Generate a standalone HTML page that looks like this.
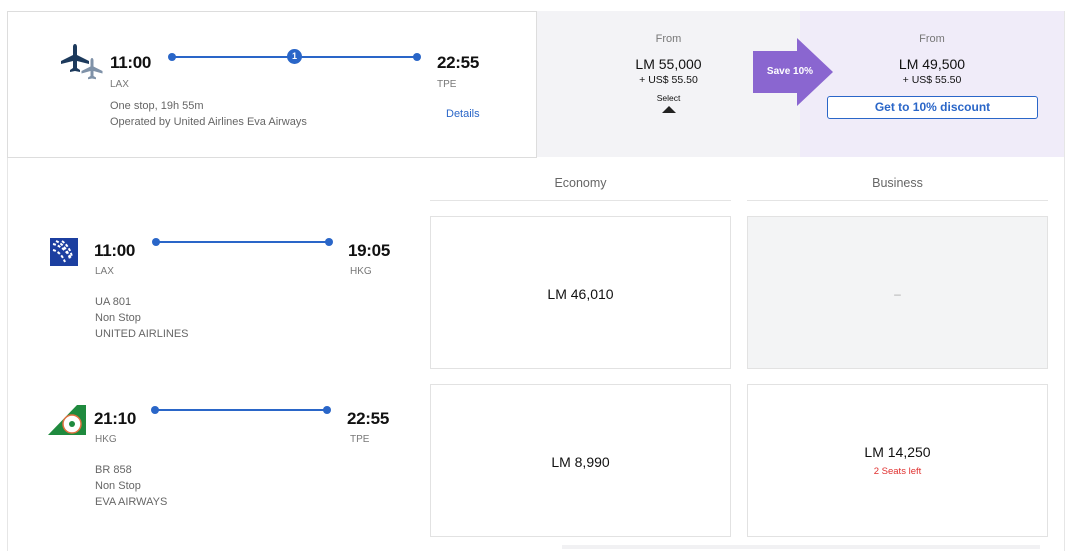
<!DOCTYPE html>
<html><head><meta charset="utf-8"><style>
*{margin:0;padding:0;box-sizing:border-box}
body{width:1080px;height:548px;background:#fff;font-family:"Liberation Sans",sans-serif;position:relative;overflow:hidden;color:#111}
.a{position:absolute}
.t{font-size:17px;font-weight:bold;color:#111;letter-spacing:-0.3px}
.s{font-size:10px;color:#777}
.g{font-size:11px;color:#666;line-height:16px}
.dot{width:8px;height:8px;border-radius:50%;background:#2a66c8}
.ln{height:2px;background:#2a66c8}
.box{border:1px solid #e2e2e2;background:#fff}
.c{text-align:center}
</style></head><body>
<div class="a" style="left:7px;top:11px;width:1058px;height:540px;border-right:1px solid #e6e6e6;border-left:1px solid #e6e6e6"></div>
<div class="a" style="left:7px;top:11px;width:530px;height:147px;border:1px solid #ddd"></div>
<div class="a" style="left:537px;top:11px;width:263px;height:146px;background:#f3f3f6"></div>
<div class="a" style="left:800px;top:11px;width:264px;height:146px;background:#f0ecf9"></div>

<svg class="a" style="left:60px;top:43px" width="46" height="42" viewBox="0 0 46 42">
<path fill="#1d3a5c" d="M15 1c1 0 2 1 2 3v8l12 6v3l-12-3v7l3 2v2l-5-1-5 1v-2l3-2v-7L1 21v-3l12-6V4c0-2 1-3 2-3z"/>
<path fill="#7f92a8" d="M32 15c.8 0 1.5 1 1.5 2.5v6l9 4.5v2.5l-9-2.5v5l2.5 1.5v1.8l-4-.8-4 .8v-1.8l2.5-1.5v-5l-9 2.5V28l9-4.5v-6c0-1.5.7-2.5 1.5-2.5z"/>
</svg>
<div class="a t" style="left:110px;top:53px">11:00</div>
<div class="a s" style="left:110px;top:79px">LAX</div>
<div class="a dot" style="left:168px;top:53px"></div>
<div class="a ln" style="left:172px;top:56px;width:245px"></div>
<div class="a dot" style="left:413px;top:53px"></div>
<div class="a" style="left:287px;top:49px;width:15px;height:15px;border-radius:50%;background:#2a66c8;color:#fff;font-size:9px;font-weight:bold;text-align:center;line-height:15px">1</div>
<div class="a t" style="left:437px;top:53px">22:55</div>
<div class="a s" style="left:437px;top:79px">TPE</div>
<div class="a g" style="left:110px;top:98px">One stop, 19h 55m<br>Operated by United Airlines Eva Airways</div>
<div class="a" style="left:446px;top:108px;font-size:11px;color:#2a66c8">Details</div>

<div class="a c" style="left:537px;top:33px;width:263px">
<div style="font-size:11px;color:#777">From</div>
<div style="font-size:14px;margin-top:11px">LM 55,000</div>
<div style="font-size:10.5px;margin-top:2px">+ US$ 55.50</div>
<div style="font-size:8.5px;margin-top:7px">Select</div>
<div style="width:0;height:0;margin:3px auto 0;border-left:7px solid transparent;border-right:7px solid transparent;border-bottom:7px solid #222"></div>
</div>
<svg class="a" style="left:750px;top:37px" width="86" height="70"><path d="M3 14h44V1l36 34-36 34V56H3z" fill="#8a66d0"/></svg>
<div class="a" style="left:753px;top:66px;width:74px;font-size:10px;font-weight:bold;color:#fff;text-align:center">Save 10%</div>
<div class="a c" style="left:800px;top:33px;width:264px">
<div style="font-size:11px;color:#777">From</div>
<div style="font-size:14px;margin-top:11px">LM 49,500</div>
<div style="font-size:10.5px;margin-top:2px">+ US$ 55.50</div>
</div>
<div class="a c" style="left:827px;top:96px;width:211px;height:23px;border:1px solid #2a66c8;border-radius:3px;background:#fff;color:#2a66c8;font-size:12px;font-weight:bold;line-height:21px">Get to 10% discount</div>

<div class="a c" style="left:430px;top:176px;width:301px;font-size:12.5px;color:#666">Economy</div>
<div class="a" style="left:430px;top:200px;width:301px;height:1px;background:#e4e4e4"></div>
<div class="a c" style="left:747px;top:176px;width:301px;font-size:12.5px;color:#666">Business</div>
<div class="a" style="left:747px;top:200px;width:301px;height:1px;background:#e4e4e4"></div>

<div class="a box c" style="left:430px;top:216px;width:301px;height:153px;padding-top:69px;font-size:14px">LM 46,010</div>
<div class="a box c" style="left:747px;top:216px;width:301px;height:153px;background:#f3f4f5;padding-top:70px;font-size:12px;color:#aaa">–</div>
<div class="a box c" style="left:430px;top:384px;width:301px;height:153px;padding-top:69px;font-size:14px">LM 8,990</div>
<div class="a box c" style="left:747px;top:384px;width:301px;height:153px;padding-top:59px;font-size:14px">LM 14,250<div style="font-size:9.5px;color:#e0302f;margin-top:6px">2 Seats left</div></div>
<div class="a" style="left:562px;top:545px;width:478px;height:4px;background:#f1f1f3"></div>

<svg class="a" style="left:50px;top:238px" width="32" height="30"><rect width="28" height="28" fill="#1c3fa0"/><path d="M3 6q10 2 18 14M3 12q8 2 12 12M6 3q10 4 14 18M12 3q8 6 10 16" stroke="#fff" stroke-width="2" fill="none" stroke-dasharray="3 2"/></svg>
<div class="a t" style="left:94px;top:241px">11:00</div>
<div class="a s" style="left:95px;top:266px">LAX</div>
<div class="a dot" style="left:152px;top:238px"></div>
<div class="a ln" style="left:156px;top:241px;width:173px"></div>
<div class="a dot" style="left:325px;top:238px"></div>
<div class="a t" style="left:348px;top:241px">19:05</div>
<div class="a s" style="left:350px;top:266px">HKG</div>
<div class="a g" style="left:95px;top:294px">UA 801<br>Non Stop<br>UNITED AIRLINES</div>

<svg class="a" style="left:47px;top:404px" width="40" height="32"><path d="M1 31L30 1h9v30z" fill="#1f8a3e"/><circle cx="25" cy="20" r="9" fill="#fff" stroke="#e07040" stroke-width="1.5"/><circle cx="25" cy="20" r="3" fill="#1f8a3e"/></svg>
<div class="a t" style="left:94px;top:409px">21:10</div>
<div class="a s" style="left:95px;top:434px">HKG</div>
<div class="a dot" style="left:151px;top:406px"></div>
<div class="a ln" style="left:155px;top:409px;width:173px"></div>
<div class="a dot" style="left:323px;top:406px"></div>
<div class="a t" style="left:347px;top:409px">22:55</div>
<div class="a s" style="left:350px;top:434px">TPE</div>
<div class="a g" style="left:95px;top:462px">BR 858<br>Non Stop<br>EVA AIRWAYS</div>
</body></html>
